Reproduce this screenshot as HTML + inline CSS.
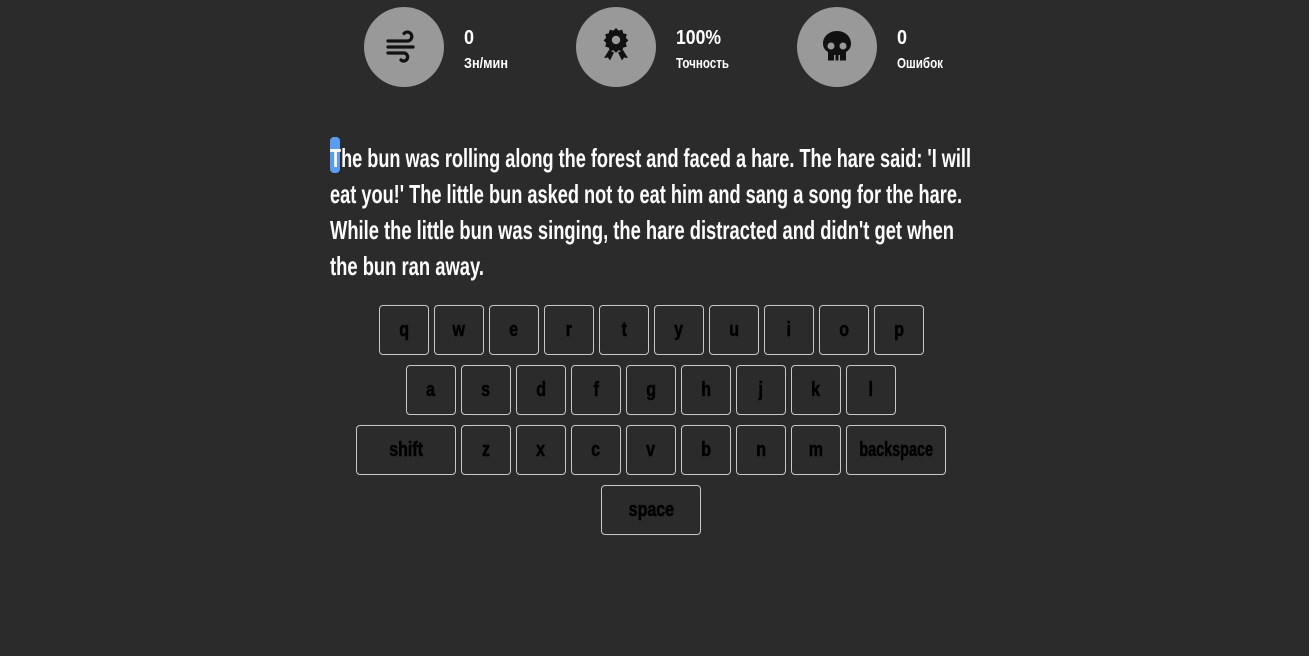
<!DOCTYPE html>
<html><head><meta charset="utf-8"><meta name="color-scheme" content="light only"><style>
:root{color-scheme:light only}
html,body{margin:0;padding:0;background:#2b2b2b;width:1309px;height:656px;overflow:hidden;position:relative}
svg{position:absolute;left:0;top:0}
text{font-family:"Liberation Sans","Noto Sans CJK SC",sans-serif}
.m{fill:#fff;font-size:26px;font-weight:700}
.key{position:absolute;width:48px;height:48px;border:1px solid #c8c8c8;border-radius:4px;display:flex;align-items:center;justify-content:center;font-family:"Liberation Sans",sans-serif;font-weight:700;font-size:20px;color:#000;-webkit-text-stroke:0.6px #000;-webkit-text-fill-color:#000}
.key span{display:inline-block;transform:scaleX(0.8);white-space:nowrap}
.w{width:98px}
</style></head><body>
<svg width="1309" height="656" viewBox="0 0 1309 656" xmlns="http://www.w3.org/2000/svg">
<circle cx="404" cy="47" r="40" fill="#999"/>
<circle cx="616" cy="47" r="40" fill="#999"/>
<circle cx="837" cy="47" r="40" fill="#999"/>
<g fill="none" stroke="#111" stroke-width="3.2" stroke-linecap="round">
<path d="M388 41 H408 A4.5 4.5 0 1 0 404 33.5"/>
<path d="M388 47 H413"/>
<path d="M388 53 H404 A4 4 0 1 1 401 60"/>
</g>
<g fill="#111">
<path d="M616 28 l2.6 2.6 3.6-1 1 3.6 3.6 1-1 3.6 2.6 2.6-2.6 2.6 1 3.6-3.6 1-1 3.6-3.6-1-2.6 2.6-2.6-2.6-3.6 1-1-3.6-3.6-1 1-3.6-2.6-2.6 2.6-2.6-1-3.6 3.6-1 1-3.6 3.6 1z"/>
<path d="M609 50 l-5 8 4 -0.5 2 3 4-8z M623 50 l5 8 -4 -0.5 -2 3 -4-8z"/>
<path d="M837 31 c-8 0 -14 5.5 -14 12.5 c0 4.5 2.5 7 5 8.5 v8.5 h18 v-8.5 c2.5-1.5 5-4 5-8.5 c0-7 -6-12.5 -14-12.5z"/>
</g>
<circle cx="616" cy="40" r="4.2" fill="#999"/>
<circle cx="831" cy="46" r="3.5" fill="#999"/>
<circle cx="843" cy="46" r="3.5" fill="#999"/>
<rect x="834" y="55" width="1.5" height="6" fill="#999"/>
<rect x="838.5" y="55" width="1.5" height="6" fill="#999"/>
<g style="fill:#fff;font-weight:700">
<text x="464" y="44" font-size="20" textLength="10" lengthAdjust="spacingAndGlyphs">0</text>
<text x="676" y="44" font-size="20" textLength="45" lengthAdjust="spacingAndGlyphs">100%</text>
<text x="897" y="44" font-size="20" textLength="10" lengthAdjust="spacingAndGlyphs">0</text>
<text x="464" y="68" font-size="15" textLength="44" lengthAdjust="spacingAndGlyphs">Зн/мин</text>
<text x="676" y="68" font-size="15" textLength="53" lengthAdjust="spacingAndGlyphs">Точность</text>
<text x="897" y="68" font-size="15" textLength="46" lengthAdjust="spacingAndGlyphs">Ошибок</text>
</g>
<rect x="330" y="137" width="10" height="36" rx="4" fill="#5b9cf0"/>
<text class="m" x="330" y="167" textLength="641" lengthAdjust="spacingAndGlyphs">The bun was rolling along the forest and faced a hare. The hare said: 'I will</text>
<text class="m" x="330" y="203" textLength="632" lengthAdjust="spacingAndGlyphs">eat you!' The little bun asked not to eat him and sang a song for the hare.</text>
<text class="m" x="330" y="239" textLength="624" lengthAdjust="spacingAndGlyphs">While the little bun was singing, the hare distracted and didn't get when</text>
<text class="m" x="330" y="275" textLength="154" lengthAdjust="spacingAndGlyphs">the bun ran away.</text>
</svg>
<div class="key" style="left:379px;top:305px"><span>q</span></div>
<div class="key" style="left:434px;top:305px"><span>w</span></div>
<div class="key" style="left:489px;top:305px"><span>e</span></div>
<div class="key" style="left:544px;top:305px"><span>r</span></div>
<div class="key" style="left:599px;top:305px"><span>t</span></div>
<div class="key" style="left:654px;top:305px"><span>y</span></div>
<div class="key" style="left:709px;top:305px"><span>u</span></div>
<div class="key" style="left:764px;top:305px"><span>i</span></div>
<div class="key" style="left:819px;top:305px"><span>o</span></div>
<div class="key" style="left:874px;top:305px"><span>p</span></div>
<div class="key" style="left:406px;top:365px"><span>a</span></div>
<div class="key" style="left:461px;top:365px"><span>s</span></div>
<div class="key" style="left:516px;top:365px"><span>d</span></div>
<div class="key" style="left:571px;top:365px"><span>f</span></div>
<div class="key" style="left:626px;top:365px"><span>g</span></div>
<div class="key" style="left:681px;top:365px"><span>h</span></div>
<div class="key" style="left:736px;top:365px"><span>j</span></div>
<div class="key" style="left:791px;top:365px"><span>k</span></div>
<div class="key" style="left:846px;top:365px"><span>l</span></div>
<div class="key w" style="left:356px;top:425px"><span>shift</span></div>
<div class="key" style="left:461px;top:425px"><span>z</span></div>
<div class="key" style="left:516px;top:425px"><span>x</span></div>
<div class="key" style="left:571px;top:425px"><span>c</span></div>
<div class="key" style="left:626px;top:425px"><span>v</span></div>
<div class="key" style="left:681px;top:425px"><span>b</span></div>
<div class="key" style="left:736px;top:425px"><span>n</span></div>
<div class="key" style="left:791px;top:425px"><span>m</span></div>
<div class="key w" style="left:846px;top:425px"><span style="transform:scaleX(0.72)">backspace</span></div>
<div class="key w" style="left:601px;top:485px"><span>space</span></div>
</body></html>
